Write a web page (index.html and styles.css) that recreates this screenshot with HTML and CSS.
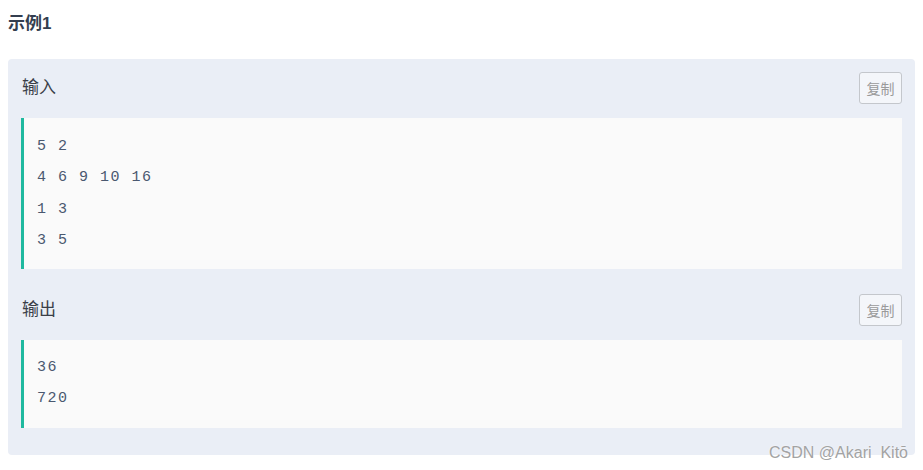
FILE: index.html
```html
<!DOCTYPE html>
<html lang="zh">
<head>
<meta charset="utf-8">
<link rel="stylesheet" href="styles.css">
</head>
<body>
<h3 class="title">示例1</h3>
<div class="panel">
  <div class="head">
    <span class="label">输入</span>
    <button class="copy">复制</button>
  </div>
  <pre class="code">5 2
4 6 9 10 16
1 3
3 5</pre>
  <div class="head head-out">
    <span class="label">输出</span>
    <button class="copy">复制</button>
  </div>
  <pre class="code code-out">36
720</pre>
</div>
<div class="watermark">CSDN @Akari&nbsp; Kitō</div>
</body>
</html>
```
FILE: styles.css
```css
html, body {
  margin: 0;
  padding: 0;
  background: #ffffff;
}
body {
  padding: 8px;
  width: 907px;
  position: relative;
  font-family: "Liberation Sans", "Noto Sans CJK SC", sans-serif;
}
.title {
  margin: 0 0 19px 0;
  font-size: 17px;
  line-height: 32px;
  font-weight: bold;
  color: #333e4f;
}
.panel {
  background: #eaeef6;
  border-radius: 4px;
  padding: 13px 13px 27px 13px;
}
.head {
  display: flex;
  justify-content: space-between;
  align-items: center;
  height: 32px;
  margin-bottom: 14px;
}
.head-out {
  margin-top: 25px;
}
.label {
  font-size: 17px;
  line-height: 20px;
  color: #3a3f48;
  padding-left: 1px;
  padding-bottom: 1px;
}
.copy {
  box-sizing: border-box;
  width: 43px;
  height: 32px;
  border: 1px solid #c4c7cc;
  border-radius: 3px;
  background: #f4f6fa;
  color: #9a9a9a;
  font-size: 14px;
  font-family: "Noto Sans CJK SC", sans-serif;
  padding: 0;
  margin-right: 0;
}
.code {
  margin: 0;
  background: #fafafa;
  border-left: 3px solid #1fb99f;
  padding: 13px 0 13px 13px;
  font-family: "Liberation Mono", monospace;
  font-size: 15px;
  letter-spacing: 1.5px;
  line-height: 31.3px;
  color: #4a5870;
}
.code-out {
  padding-top: 12px;
  padding-bottom: 13px;
}
.watermark {
  position: absolute;
  right: 15px;
  top: 443px;
  font-size: 16px;
  line-height: 20px;
  color: #a3a3a3;
  text-shadow: 0 0 2px #ffffff;
}
```
